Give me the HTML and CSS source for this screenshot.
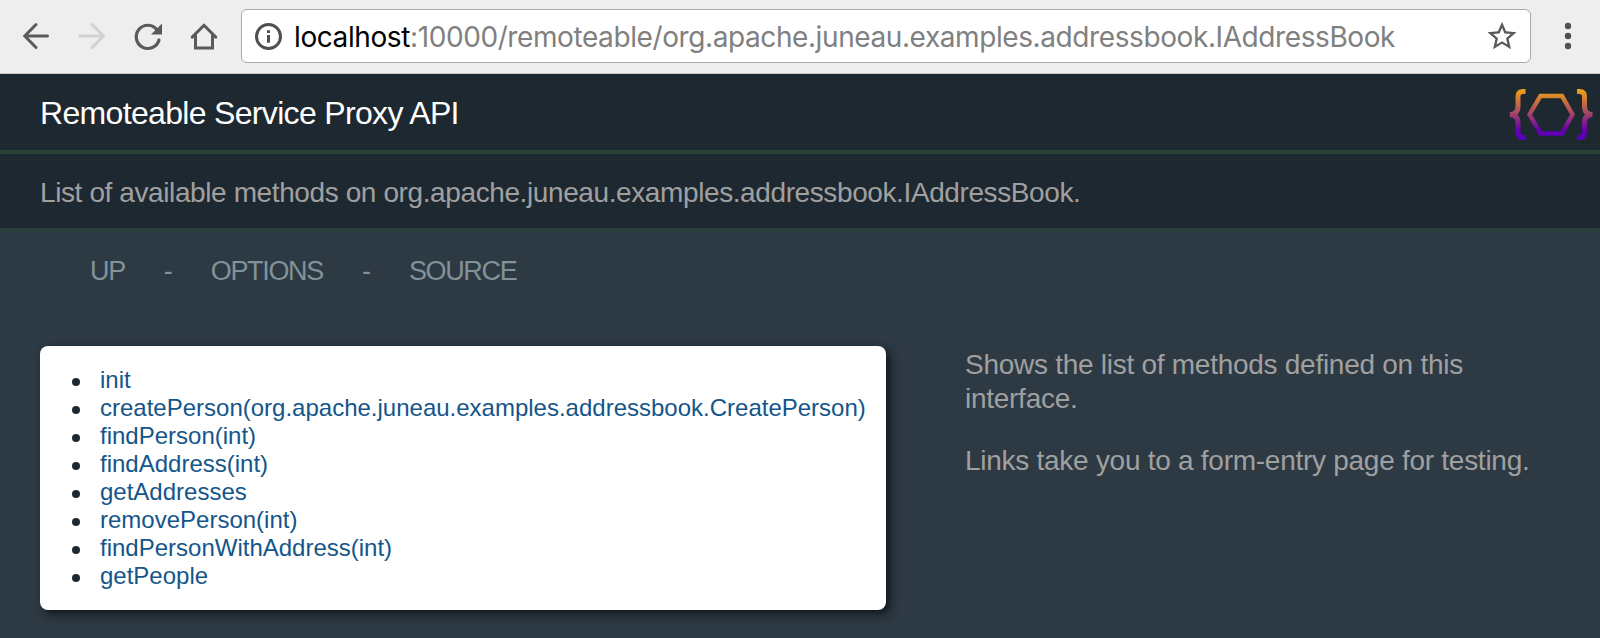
FILE: index.html
```
<!DOCTYPE html>
<html lang="en">
<head>
<meta charset="utf-8">
<title>Remoteable Service Proxy API</title>
<link rel="stylesheet" href="styles.css">
</head>
<body>
<div class="toolbar">
  <svg class="icon" viewBox="0 0.5 28 28"><path d="M15 3L3.800 14.500L15 26M4.500 14.500H26.500"/></svg>
  <svg class="icon icon-disabled" viewBox="0 0.5 28 28"><path d="M15 3L26.500 14.500L15 26M25.500 14.500H3"/></svg>
  <svg class="icon" viewBox="0 0.5 28 28"><path class="arc" d="M24.200 8.500A11.600 11.600 0 1 0 26 18.500"/><path class="solid" d="M29 2V13H18Z"/></svg>
  <svg class="icon" viewBox="0 0.5 28 28"><path d="M3.200 15.600L15 3.800L26.800 15.600M6.500 14V26.500H23.500V14"/></svg>
  <div class="address">
    <svg class="info" viewBox="0 0 28 28"><circle cx="13.500" cy="14.500" r="12"/><path d="M13.500 13V20.800M13.500 8.200V11"/></svg>
    <div class="url"><span class="host">localhost</span>:10000/remoteable/org.apache.juneau.examples.addressbook.IAddressBook</div>
    <svg class="star" viewBox="1.65 1.5 20.7 20.7"><path d="M22 9.240l-7.190-.62L12 2 9.190 8.630 2 9.240l5.460 4.730L5.820 21 12 17.270 18.180 21l-1.630-7.030L22 9.240zM12 15.400l-3.760 2.270 1-4.280-3.320-2.880 4.380-.38L12 6.100l1.710 4.040 4.380.38-3.320 2.880 1 4.280L12 15.400z"/></svg>
  </div>
  <svg class="menu" viewBox="0 0 8 28"><circle cx="4" cy="4" r="3.200"/><circle cx="4" cy="14" r="3.200"/><circle cx="4" cy="24" r="3.200"/></svg>
</div>
<header class="title-bar">
  <h1>Remoteable Service Proxy API</h1>
  <svg class="logo" viewBox="0 0 84 52">
    <defs><linearGradient id="flame" gradientUnits="userSpaceOnUse" x1="0" y1="2" x2="0" y2="49">
      <stop offset="0" stop-color="#eea016"/><stop offset=".5" stop-color="#a34565"/><stop offset=".85" stop-color="#6500ae"/><stop offset="1" stop-color="#5a00bd"/>
    </linearGradient></defs>
    <path class="brace" d="M16.500 3.500H14Q9 3.500 9 8.500V18Q9 26.500 0.800 26.500Q9 26.500 9 35V43.500Q9 49.500 14 49.500H16.500"/>
    <path class="brace" d="M68 3.500H70.500Q75.500 3.500 75.500 8.500V18Q75.500 26.500 83.500 26.500Q75.500 26.500 75.500 35V43.500Q75.500 49.500 70.500 49.500H68"/>
    <path class="hex" d="M31.500 8H53L63.500 26.500L53 45.500H31.500L20.500 26.500Z"/>
  </svg>
</header>
<div class="description">List of available methods on org.apache.juneau.examples.addressbook.IAddressBook.</div>
<nav><a>UP</a><span>-</span><a>OPTIONS</a><span>-</span><a>SOURCE</a></nav>
<main>
  <ul class="methods">
    <li>init</li>
    <li>createPerson(org.apache.juneau.examples.addressbook.CreatePerson)</li>
    <li>findPerson(int)</li>
    <li>findAddress(int)</li>
    <li>getAddresses</li>
    <li>removePerson(int)</li>
    <li>findPersonWithAddress(int)</li>
    <li>getPeople</li>
  </ul>
  <aside>
    <p>Shows the list of methods defined on this interface.</p>
    <p>Links take you to a form-entry page for testing.</p>
  </aside>
</main>
</body>
</html>
```
FILE: styles.css
```
* { box-sizing: border-box; }
body {
  margin: 0;
  height: 638px;
  overflow: hidden;
  background: #2d3943;
  font-family: "Liberation Sans", Arial, sans-serif;
}
.toolbar {
  display: flex;
  align-items: center;
  height: 74px;
  padding: 0 28px 2px 21px;
  background: #eee;
  border-bottom: 1px solid #ccc;
}
.icon {
  flex: none;
  width: 28px;
  height: 28px;
  margin-right: 28px;
  overflow: visible;
  fill: none;
  stroke: #5a5a5a;
  stroke-width: 3;
  stroke-linecap: round;
}
.icon-disabled { stroke: #d2d2d2; }
.icon .arc { stroke-width: 3.2; }
.icon .solid { fill: #5a5a5a; stroke: none; }
.address {
  display: flex;
  align-items: center;
  width: 1290px;
  height: 54px;
  margin-left: -4px;
  padding: 0 13px;
  background: #fff;
  border: 1px solid #a9a9a9;
  border-radius: 6px;
}
.info { width: 28px; height: 28px; fill: none; stroke: #505050; stroke-width: 3; }
.url {
  flex: 1;
  margin-left: 11px;
  padding-top: 2px;
  font: 28px/34px Inter, sans-serif;
  letter-spacing: -0.405px;
  white-space: nowrap;
  color: #808080;
}
.host { color: #000; }
.star { width: 30px; height: 30px; fill: #5a5a5a; }
.menu { width: 8px; height: 28px; margin-left: auto; fill: #505050; }
.title-bar {
  display: flex;
  align-items: center;
  justify-content: space-between;
  height: 80px;
  padding: 0 7px 0 40px;
  background: #1e2830;
  border-bottom: 4px solid #2a4038;
}
h1 {
  margin: 0;
  padding-top: 1px;
  font-size: 32px;
  font-weight: 400;
  line-height: 38px;
  letter-spacing: -0.67px;
  color: #fff;
}
.logo { width: 84px; height: 52px; margin-top: 4px; overflow: visible; fill: none; stroke: url(#flame); }
.brace { stroke-width: 5; }
.hex { stroke-width: 4.4; }
.description {
  height: 78px;
  padding: 23px 40px 0;
  font-size: 28px;
  line-height: 32px;
  letter-spacing: -0.395px;
  color: #a0a0a0;
  background: #1e2830;
  border-bottom: 4px solid #2a4038;
}
nav {
  display: flex;
  height: 114px;
  padding: 23px 0 0 90px;
  font-size: 27px;
  line-height: 32px;
  letter-spacing: -1.35px;
  color: #82929a;
}
nav span { width: 9px; margin: 0 38px 0 39px; }
main { display: flex; gap: 79px; padding-left: 40px; }
.methods {
  width: 846px;
  height: 264px;
  margin: 0;
  padding: 20px 0 0 32px;
  list-style: none;
  font-size: 24px;
  line-height: 28px;
  color: #14558a;
  background: #fff;
  border-radius: 8px;
  box-shadow: 4px 4px 8px #11171c;
}
.methods li { display: flex; align-items: center; gap: 20px; }
.methods li::before {
  content: "";
  width: 8px;
  height: 8px;
  margin-top: 3px;
  border-radius: 50%;
  background: #1e2830;
}
aside {
  width: 580px;
  font-size: 28px;
  line-height: 34px;
  letter-spacing: -0.27px;
  color: #a0a0a0;
}
aside p { margin: 2px 0 28px; }
```
